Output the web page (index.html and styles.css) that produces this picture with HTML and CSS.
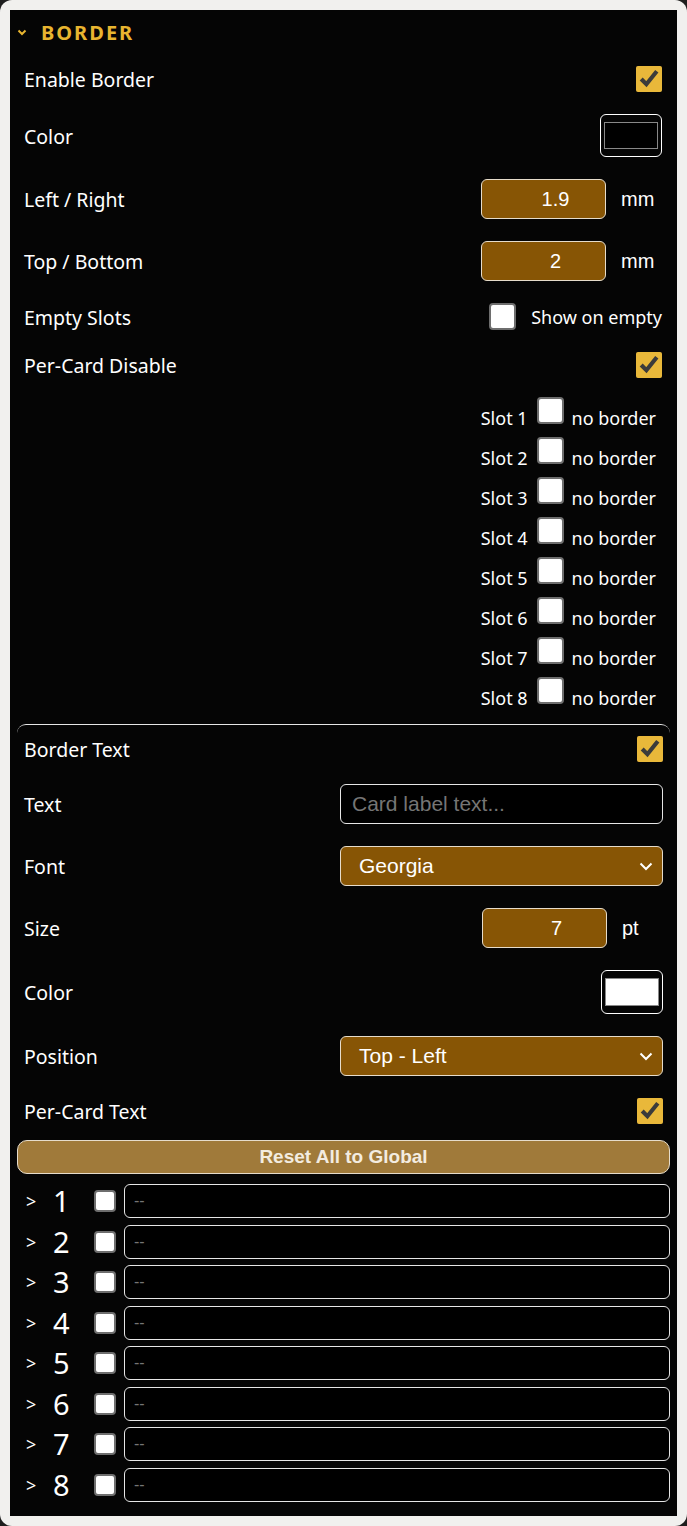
FILE: index.html
```html
<!DOCTYPE html>
<html lang="en">
<head>
    <meta charset="UTF-8">
    <title>Border settings</title>
    <link rel="stylesheet" href="styles.css">
</head>
<body>
    <div class="frame">
        <div class="panel">
            <div class="section-head">
                <svg class="chev" width="10" height="7" viewBox="0 0 10 7"><path d="M1.5 1.5 L5 5 L8.5 1.5" fill="none" stroke="#e8b530" stroke-width="2"/></svg>
                <span class="section-title">BORDER</span>
            </div>

            <div class="rows">
                <div class="row">
                    <span class="label">Enable Border</span>
                    <input type="checkbox" class="check" checked>
                </div>
                <div class="row">
                    <span class="label">Color</span>
                    <span class="swatch"><span class="swatch-fill"></span></span>
                </div>
                <div class="row">
                    <span class="label">Left / Right</span>
                    <span class="num-wrap">
                        <input type="text" class="num" value="1.9">
                        <span class="unit">mm</span>
                    </span>
                </div>
                <div class="row">
                    <span class="label">Top / Bottom</span>
                    <span class="num-wrap">
                        <input type="text" class="num" value="2">
                        <span class="unit">mm</span>
                    </span>
                </div>
                <div class="row">
                    <span class="label">Empty Slots</span>
                    <span class="inline-opt">
                        <input type="checkbox" class="check box">
                        <span>Show on empty</span>
                    </span>
                </div>
                <div class="row">
                    <span class="label">Per-Card Disable</span>
                    <input type="checkbox" class="check" checked>
                </div>
            </div>

            <div class="slots">
                <div class="slot"><span>Slot 1</span><input type="checkbox" class="check box slot-check"><span>no border</span></div>
                <div class="slot"><span>Slot 2</span><input type="checkbox" class="check box slot-check"><span>no border</span></div>
                <div class="slot"><span>Slot 3</span><input type="checkbox" class="check box slot-check"><span>no border</span></div>
                <div class="slot"><span>Slot 4</span><input type="checkbox" class="check box slot-check"><span>no border</span></div>
                <div class="slot"><span>Slot 5</span><input type="checkbox" class="check box slot-check"><span>no border</span></div>
                <div class="slot"><span>Slot 6</span><input type="checkbox" class="check box slot-check"><span>no border</span></div>
                <div class="slot"><span>Slot 7</span><input type="checkbox" class="check box slot-check"><span>no border</span></div>
                <div class="slot"><span>Slot 8</span><input type="checkbox" class="check box slot-check"><span>no border</span></div>
            </div>

            <div class="sub">
                <div class="rows sub-rows">
                    <div class="row">
                        <span class="label">Border Text</span>
                        <input type="checkbox" class="check" checked>
                    </div>
                    <div class="row">
                        <span class="label">Text</span>
                        <input type="text" class="wide" placeholder="Card label text...">
                    </div>
                    <div class="row">
                        <span class="label">Font</span>
                        <div class="select">
                            <span>Georgia</span>
                            <svg width="14" height="9" viewBox="0 0 14 9"><path d="M1.5 1.5 L7 7 L12.5 1.5" fill="none" stroke="#fff" stroke-width="2"/></svg>
                        </div>
                    </div>
                    <div class="row">
                        <span class="label">Size</span>
                        <span class="num-wrap">
                            <input type="text" class="num" value="7">
                            <span class="unit">pt</span>
                        </span>
                    </div>
                    <div class="row">
                        <span class="label">Color</span>
                        <span class="swatch swatch-tall"><span class="swatch-fill white"></span></span>
                    </div>
                    <div class="row">
                        <span class="label">Position</span>
                        <div class="select">
                            <span>Top - Left</span>
                            <svg width="14" height="9" viewBox="0 0 14 9"><path d="M1.5 1.5 L7 7 L12.5 1.5" fill="none" stroke="#fff" stroke-width="2"/></svg>
                        </div>
                    </div>
                    <div class="row">
                        <span class="label">Per-Card Text</span>
                        <input type="checkbox" class="check" checked>
                    </div>
                </div>

                <button type="button" class="reset">Reset All to Global</button>

                <div class="cards">
                    <div class="card-row"><span class="arrow">&gt;</span><span class="idx">1</span><input type="checkbox" class="box card-check"><input type="text" class="card-text" placeholder="--"></div>
                    <div class="card-row"><span class="arrow">&gt;</span><span class="idx">2</span><input type="checkbox" class="box card-check"><input type="text" class="card-text" placeholder="--"></div>
                    <div class="card-row"><span class="arrow">&gt;</span><span class="idx">3</span><input type="checkbox" class="box card-check"><input type="text" class="card-text" placeholder="--"></div>
                    <div class="card-row"><span class="arrow">&gt;</span><span class="idx">4</span><input type="checkbox" class="box card-check"><input type="text" class="card-text" placeholder="--"></div>
                    <div class="card-row"><span class="arrow">&gt;</span><span class="idx">5</span><input type="checkbox" class="box card-check"><input type="text" class="card-text" placeholder="--"></div>
                    <div class="card-row"><span class="arrow">&gt;</span><span class="idx">6</span><input type="checkbox" class="box card-check"><input type="text" class="card-text" placeholder="--"></div>
                    <div class="card-row"><span class="arrow">&gt;</span><span class="idx">7</span><input type="checkbox" class="box card-check"><input type="text" class="card-text" placeholder="--"></div>
                    <div class="card-row"><span class="arrow">&gt;</span><span class="idx">8</span><input type="checkbox" class="box card-check"><input type="text" class="card-text" placeholder="--"></div>
                </div>
            </div>
        </div>
    </div>
</body>
</html>
```

FILE: styles.css
```css
* {
    box-sizing: border-box;
}
body {
    margin: 0;
    background-color: #1e1e1e;
    font-family: "Noto Sans", sans-serif;
    color: #fff;
}
.frame {
    width: 687px;
    height: 1526px;
    background-color: #f1f0ee;
    border-radius: 12px;
    padding: 10px;
}
.panel {
    background-color: #050505;
    height: 100%;
    padding: 0 7px;
}
.section-head {
    height: 45px;
    display: flex;
    align-items: center;
    gap: 14px;
}
.section-title {
    color: #e8b530;
    font-weight: bold;
    font-size: 20px;
    letter-spacing: 2px;
}
.rows {
    display: flex;
    flex-direction: column;
    gap: 22px;
    padding: 11px 8px 0 7px;
}
.row {
    display: flex;
    align-items: center;
    justify-content: space-between;
}
.label {
    font-size: 19.5px;
    line-height: 22px;
    position: relative;
    top: 1px;
}
.check {
    width: 26px;
    height: 26px;
    margin: 0;
    accent-color: #e9b83a;
}
.box {
    appearance: none;
    background-color: #fff;
    border: 2px solid #6e6e6e;
    border-radius: 4px;
}
.swatch {
    width: 62px;
    height: 43px;
    border: 1px solid #fff;
    border-radius: 6px;
    padding: 7px 3px;
    display: block;
}
.swatch-tall {
    height: 44px;
}
.swatch-fill {
    display: block;
    width: 100%;
    height: 100%;
    background-color: #000;
    border: 1px solid #888;
}
.swatch-fill.white {
    background-color: #fff;
}
.num-wrap {
    display: flex;
    align-items: center;
}
.num {
    width: 125px;
    height: 40px;
    background-color: #875505;
    border: 1px solid #e6dccb;
    border-radius: 6px;
    color: #fff;
    font-family: "Liberation Sans", Arial, sans-serif;
    font-size: 20px;
    text-align: center;
    padding: 0 0 0 24px;
}
.unit {
    width: 41px;
    margin-left: 15px;
    font-family: "Liberation Sans", Arial, sans-serif;
    font-size: 20px;
}
.inline-opt {
    display: flex;
    align-items: center;
    gap: 15px;
    font-size: 18px;
    line-height: 22px;
}
.inline-opt .check {
    width: 27px;
    height: 27px;
}
.slots {
    margin-top: 20px;
    padding-right: 14px;
}
.slot {
    height: 40px;
    display: flex;
    align-items: center;
    justify-content: flex-end;
    font-size: 18px;
}
.slot-check {
    width: 27px;
    height: 27px;
    margin: 0 8px 15px 9px;
}
.sub {
    margin-top: 6px;
    border-top: 1px solid #e6e6e6;
    border-radius: 9px 9px 0 0;
}
.sub-rows {
    padding: 11px 7px 0 7px;
}
.wide {
    width: 323px;
    height: 40px;
    background-color: #000;
    border: 1px solid #e6e6e6;
    border-radius: 6px;
    color: #fff;
    font-family: "Liberation Sans", Arial, sans-serif;
    font-size: 21px;
    padding: 0 11px;
}
.wide::placeholder {
    color: #757575;
}
.select {
    width: 323px;
    height: 40px;
    background-color: #875505;
    border: 1px solid #e6dccb;
    border-radius: 6px;
    font-family: "Liberation Sans", Arial, sans-serif;
    font-size: 21px;
    display: flex;
    align-items: center;
    justify-content: space-between;
    padding: 0 9px 0 18px;
}
.reset {
    display: block;
    width: 100%;
    height: 34px;
    margin-top: 16px;
    background-color: #a07a3a;
    border: 1px solid #e6dccb;
    border-radius: 10px;
    color: #f3ece0;
    font-family: "Liberation Sans", Arial, sans-serif;
    font-weight: bold;
    font-size: 19px;
}
.cards {
    margin-top: 10px;
    display: flex;
    flex-direction: column;
    gap: 6.5px;
}
.card-row {
    display: flex;
    align-items: center;
    padding-left: 9px;
}
.arrow {
    width: 27px;
    font-size: 18px;
}
.idx {
    width: 41px;
    font-size: 29px;
    line-height: 34px;
}
.card-check {
    width: 22px;
    height: 22px;
    margin: 0 8px 0 0;
}
.card-text {
    flex: 1;
    height: 34px;
    background-color: #000;
    border: 1px solid #e6e6e6;
    border-radius: 6px;
    color: #fff;
    font-family: "Liberation Sans", Arial, sans-serif;
    font-size: 16px;
    padding: 0 9px;
}
.card-text::placeholder {
    color: #757575;
}
```
